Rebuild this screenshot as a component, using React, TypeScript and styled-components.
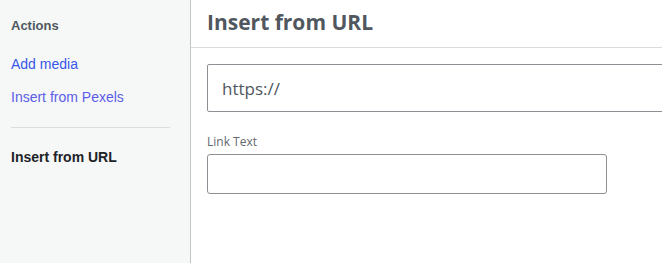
import styled, { createGlobalStyle } from "styled-components";

const GlobalStyle = createGlobalStyle`
  html, body {
    margin: 0;
    padding: 0;
    height: 100%;
    overflow: hidden;
    background: #ffffff;
  }
  #root {
    height: 100%;
  }
`;

const Frame = styled.div`
  display: flex;
  height: 100vh;
  width: 100vw;
  overflow: hidden;
`;

const Sidebar = styled.nav`
  flex: 0 0 190px;
  background: #f6f7f7;
  border-right: 1px solid #c3c4c7;
  padding-top: 17px;
  font-family: "Liberation Sans", Arial, sans-serif;
`;

const SidebarHeading = styled.h2`
  margin: 0 0 12px;
  padding: 0 11px;
  font-size: 13px;
  line-height: 18px;
  font-weight: 700;
  color: #50575e;
`;

const MenuItem = styled.a<{ $visited?: boolean; $active?: boolean }>`
  display: block;
  padding: 8px 11px 7px;
  font-size: 14px;
  line-height: 18px;
  text-decoration: none;
  font-weight: ${(p) => (p.$active ? 700 : 400)};
  color: ${(p) => (p.$active ? "#1d2327" : p.$visited ? "#5b5ee6" : "#3858e9")};
  cursor: pointer;
`;

const Separator = styled.div`
  height: 1px;
  background: #dcdcde;
  margin: 14px 20px 12px 11px;
`;

const Main = styled.main`
  flex: 1;
  min-width: 0;
  overflow: hidden;
  font-family: "Open Sans", "Noto Sans", sans-serif;
`;

const Header = styled.header`
  height: 47px;
  border-bottom: 1px solid #dcdcde;
  padding: 0 16px;
`;

const Title = styled.h1`
  margin: 0;
  font-size: 21px;
  line-height: 45px;
  font-weight: 700;
  color: #50575e;
  white-space: nowrap;
`;

const Content = styled.section`
  padding: 16px 16px 0;
`;

const UrlInput = styled.input`
  display: block;
  box-sizing: border-box;
  width: 540px;
  height: 48px;
  margin: 0 0 21px;
  padding: 0 14px;
  border: 1px solid #8c8f94;
  border-radius: 2px;
  font-family: inherit;
  font-size: 17px;
  color: #50575e;
  background: #ffffff;
  outline: none;
`;

const Label = styled.label`
  display: block;
  margin-bottom: 3px;
  font-size: 12px;
  line-height: 18px;
  color: #646970;
`;

const TextInput = styled.input`
  display: block;
  box-sizing: border-box;
  width: 400px;
  height: 40px;
  padding: 0 8px;
  border: 1px solid #8c8f94;
  border-radius: 3px;
  font-family: inherit;
  font-size: 14px;
  color: #2c3338;
  background: #ffffff;
  outline: none;
`;

export default function App() {
  return (
    <>
      <GlobalStyle />
      <Frame>
        <Sidebar>
          <SidebarHeading>Actions</SidebarHeading>
          <MenuItem>Add media</MenuItem>
          <MenuItem $visited>Insert from Pexels</MenuItem>
          <Separator />
          <MenuItem $active>Insert from URL</MenuItem>
        </Sidebar>
        <Main>
          <Header>
            <Title>Insert from URL</Title>
          </Header>
          <Content>
            <UrlInput defaultValue="https://" />
            <Label htmlFor="link-text">Link Text</Label>
            <TextInput id="link-text" />
          </Content>
        </Main>
      </Frame>
    </>
  );
}
